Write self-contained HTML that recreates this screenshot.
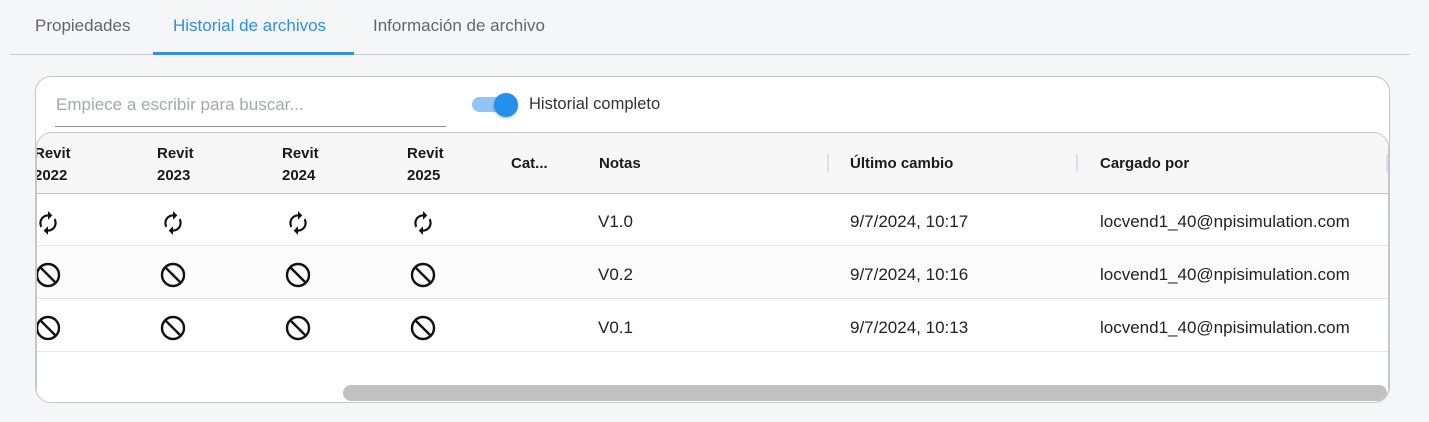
<!DOCTYPE html>
<html><head><meta charset="utf-8"><style>
*{margin:0;padding:0;box-sizing:border-box}
body{width:1429px;height:422px;background:#f5f6f8;font-family:"Liberation Sans",sans-serif;position:relative;overflow:hidden}
.a{position:absolute;white-space:nowrap}
.tab{font-size:17px;color:#5f6672;top:16px}
.card{position:absolute;left:35px;top:76px;width:1355px;height:327px;background:#fff;border:1px solid #c3c6ce;border-radius:16px;overflow:hidden}
.tbl{position:absolute;left:0px;top:55px;width:1353px;height:280px;border:1px solid #c3c6ce;border-radius:16px 16px 0 0;overflow:hidden;background:#fff}
.hd{position:absolute;left:0;top:0;width:100%;height:61px;background:#f7f7f8;border-bottom:1px solid #c3c6ce}
.th{font-weight:bold;font-size:15px;color:#1a1a1a;line-height:22px}
.row{position:absolute;left:0;width:100%;height:52px;border-bottom:1px solid #e3e5ea}
.td{font-size:17px;color:#222}
.sep{position:absolute;top:21px;width:2px;height:18px;background:#dde0e6}
</style></head><body>
<div class="a tab" style="left:35px">Propiedades</div>
<div class="a tab" style="left:173px;color:#2f8ee8">Historial de archivos</div>
<div class="a tab" style="left:373px">Información de archivo</div>
<div class="a" style="left:10px;top:54px;width:1400px;height:1px;background:#c8cbd1"></div>
<div class="a" style="left:153px;top:52px;width:201px;height:3px;background:#2f8ee8"></div>
<div class="card">
 <div class="a" style="left:20px;top:18px;font-size:17px;color:#a4a8ae">Empiece a escribir para buscar...</div>
 <div class="a" style="left:19px;top:49px;width:391px;height:1px;background:#8d9096"></div>
 <div class="a" style="left:436px;top:20px;width:42px;height:15px;border-radius:8px;background:#90c5f5"></div>
 <div class="a" style="left:458px;top:16px;width:24px;height:24px;border-radius:50%;background:#2390ea;box-shadow:0 1px 3px rgba(0,0,0,.3)"></div>
 <div class="a" style="left:493px;top:18px;font-size:16.5px;color:#333">Historial completo</div>
 <div class="tbl">
  <div class="hd">
   <div class="a th" style="left:-3px;top:10px">Revit<br>2022</div>
   <div class="a th" style="left:120px;top:10px">Revit<br>2023</div>
   <div class="a th" style="left:245px;top:10px">Revit<br>2024</div>
   <div class="a th" style="left:370px;top:10px">Revit<br>2025</div>
   <div class="a th" style="left:474px;top:20px">Cat...</div>
   <div class="a th" style="left:562px;top:20px">Notas</div>
   <div class="sep" style="left:790px"></div>
   <div class="a th" style="left:813px;top:20px">Último cambio</div>
   <div class="sep" style="left:1039px"></div>
   <div class="a th" style="left:1063px;top:20px">Cargado por</div>
   <div class="sep" style="left:1349px"></div>
  </div>
  <div class="row" style="top:61px">
   <svg class="a" style="left:-2px;top:15px" width="26" height="28" viewBox="0 0 24 24"><g transform="translate(24,0) scale(-1,1)"><path d="M12 4V1L8 5l4 4V6c3.31 0 6 2.69 6 6 0 1.01-.25 1.97-.7 2.8l1.46 1.46C19.54 15.03 20 13.57 20 12c0-4.42-3.58-8-8-8zm0 14c-3.31 0-6-2.69-6-6 0-1.01.25-1.97.7-2.8L5.24 7.74C4.46 8.97 4 10.43 4 12c0 4.42 3.58 8 8 8v3l4-4-4-4v3z" fill="#111"/></g></svg>
   <svg class="a" style="left:123px;top:15px" width="26" height="28" viewBox="0 0 24 24"><g transform="translate(24,0) scale(-1,1)"><path d="M12 4V1L8 5l4 4V6c3.31 0 6 2.69 6 6 0 1.01-.25 1.97-.7 2.8l1.46 1.46C19.54 15.03 20 13.57 20 12c0-4.42-3.58-8-8-8zm0 14c-3.31 0-6-2.69-6-6 0-1.01.25-1.97.7-2.8L5.24 7.74C4.46 8.97 4 10.43 4 12c0 4.42 3.58 8 8 8v3l4-4-4-4v3z" fill="#111"/></g></svg>
   <svg class="a" style="left:248px;top:15px" width="26" height="28" viewBox="0 0 24 24"><g transform="translate(24,0) scale(-1,1)"><path d="M12 4V1L8 5l4 4V6c3.31 0 6 2.69 6 6 0 1.01-.25 1.97-.7 2.8l1.46 1.46C19.54 15.03 20 13.57 20 12c0-4.42-3.58-8-8-8zm0 14c-3.31 0-6-2.69-6-6 0-1.01.25-1.97.7-2.8L5.24 7.74C4.46 8.97 4 10.43 4 12c0 4.42 3.58 8 8 8v3l4-4-4-4v3z" fill="#111"/></g></svg>
   <svg class="a" style="left:373px;top:15px" width="26" height="28" viewBox="0 0 24 24"><g transform="translate(24,0) scale(-1,1)"><path d="M12 4V1L8 5l4 4V6c3.31 0 6 2.69 6 6 0 1.01-.25 1.97-.7 2.8l1.46 1.46C19.54 15.03 20 13.57 20 12c0-4.42-3.58-8-8-8zm0 14c-3.31 0-6-2.69-6-6 0-1.01.25-1.97.7-2.8L5.24 7.74C4.46 8.97 4 10.43 4 12c0 4.42 3.58 8 8 8v3l4-4-4-4v3z" fill="#111"/></g></svg>
   <div class="a td" style="left:561px;top:18px">V1.0</div>
   <div class="a td" style="left:813px;top:18px">9/7/2024, 10:17</div>
   <div class="a td" style="left:1063px;top:18px">locvend1_40@npisimulation.com</div>
  </div>
  <div class="row" style="top:114px;background:#fbfbfc">
   <svg class="a" style="left:-2px;top:15px" width="26" height="26" viewBox="0 0 26 26"><circle cx="13" cy="13" r="11" fill="none" stroke="#111" stroke-width="2.4"/><path d="M5.5 5.5L20.5 20.5" stroke="#111" stroke-width="2.4"/></svg>
   <svg class="a" style="left:123px;top:15px" width="26" height="26" viewBox="0 0 26 26"><circle cx="13" cy="13" r="11" fill="none" stroke="#111" stroke-width="2.4"/><path d="M5.5 5.5L20.5 20.5" stroke="#111" stroke-width="2.4"/></svg>
   <svg class="a" style="left:248px;top:15px" width="26" height="26" viewBox="0 0 26 26"><circle cx="13" cy="13" r="11" fill="none" stroke="#111" stroke-width="2.4"/><path d="M5.5 5.5L20.5 20.5" stroke="#111" stroke-width="2.4"/></svg>
   <svg class="a" style="left:373px;top:15px" width="26" height="26" viewBox="0 0 26 26"><circle cx="13" cy="13" r="11" fill="none" stroke="#111" stroke-width="2.4"/><path d="M5.5 5.5L20.5 20.5" stroke="#111" stroke-width="2.4"/></svg>
   <div class="a td" style="left:561px;top:18px">V0.2</div>
   <div class="a td" style="left:813px;top:18px">9/7/2024, 10:16</div>
   <div class="a td" style="left:1063px;top:18px">locvend1_40@npisimulation.com</div>
  </div>
  <div class="row" style="top:167px">
   <svg class="a" style="left:-2px;top:15px" width="26" height="26" viewBox="0 0 26 26"><circle cx="13" cy="13" r="11" fill="none" stroke="#111" stroke-width="2.4"/><path d="M5.5 5.5L20.5 20.5" stroke="#111" stroke-width="2.4"/></svg>
   <svg class="a" style="left:123px;top:15px" width="26" height="26" viewBox="0 0 26 26"><circle cx="13" cy="13" r="11" fill="none" stroke="#111" stroke-width="2.4"/><path d="M5.5 5.5L20.5 20.5" stroke="#111" stroke-width="2.4"/></svg>
   <svg class="a" style="left:248px;top:15px" width="26" height="26" viewBox="0 0 26 26"><circle cx="13" cy="13" r="11" fill="none" stroke="#111" stroke-width="2.4"/><path d="M5.5 5.5L20.5 20.5" stroke="#111" stroke-width="2.4"/></svg>
   <svg class="a" style="left:373px;top:15px" width="26" height="26" viewBox="0 0 26 26"><circle cx="13" cy="13" r="11" fill="none" stroke="#111" stroke-width="2.4"/><path d="M5.5 5.5L20.5 20.5" stroke="#111" stroke-width="2.4"/></svg>
   <div class="a td" style="left:561px;top:18px">V0.1</div>
   <div class="a td" style="left:813px;top:18px">9/7/2024, 10:13</div>
   <div class="a td" style="left:1063px;top:18px">locvend1_40@npisimulation.com</div>
  </div>
  <div class="a" style="left:306px;top:252px;width:1044px;height:16px;border-radius:8px;background:#c1c1c1"></div>
 </div>
</div>
</body></html>
